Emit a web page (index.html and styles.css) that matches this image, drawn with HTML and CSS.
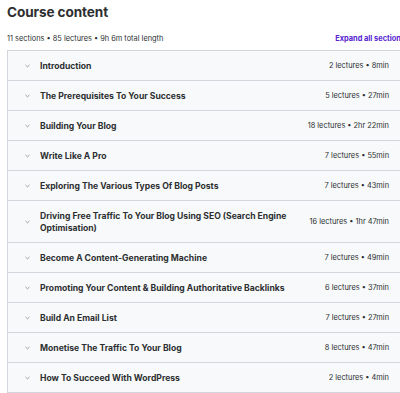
FILE: index.html
```html
<!DOCTYPE html>
<html lang="en">
<head>
  <meta charset="UTF-8">
  <meta name="viewport" content="width=device-width, initial-scale=1.0">
  <title>Course content</title>
  <link rel="stylesheet" href="styles.css">
</head>
<body>
<div class="curriculum">
  <h2>Course content</h2>
  <div class="summary">
    <span>11 sections • 85 lectures • 9h 6m total length</span>
    <a href="#" class="expand">Expand all sections</a>
  </div>

  <div class="sections">
    <div class="section">
      <svg class="chevron" viewBox="0 0 6 4"><path d="M0.6 0.7 L3 3 L5.4 0.7"/></svg>
      <span class="title">Introduction</span>
      <span class="meta">2 lectures • 8min</span>
    </div>
    <div class="section">
      <svg class="chevron" viewBox="0 0 6 4"><path d="M0.6 0.7 L3 3 L5.4 0.7"/></svg>
      <span class="title">The Prerequisites To Your Success</span>
      <span class="meta">5 lectures • 27min</span>
    </div>
    <div class="section">
      <svg class="chevron" viewBox="0 0 6 4"><path d="M0.6 0.7 L3 3 L5.4 0.7"/></svg>
      <span class="title">Building Your Blog</span>
      <span class="meta">18 lectures • 2hr 22min</span>
    </div>
    <div class="section">
      <svg class="chevron" viewBox="0 0 6 4"><path d="M0.6 0.7 L3 3 L5.4 0.7"/></svg>
      <span class="title">Write Like A Pro</span>
      <span class="meta">7 lectures • 55min</span>
    </div>
    <div class="section">
      <svg class="chevron" viewBox="0 0 6 4"><path d="M0.6 0.7 L3 3 L5.4 0.7"/></svg>
      <span class="title">Exploring The Various Types Of Blog Posts</span>
      <span class="meta">7 lectures • 43min</span>
    </div>
    <div class="section">
      <svg class="chevron" viewBox="0 0 6 4"><path d="M0.6 0.7 L3 3 L5.4 0.7"/></svg>
      <span class="title">Driving Free Traffic To Your Blog Using SEO (Search Engine Optimisation)</span>
      <span class="meta">16 lectures • 1hr 47min</span>
    </div>
    <div class="section">
      <svg class="chevron" viewBox="0 0 6 4"><path d="M0.6 0.7 L3 3 L5.4 0.7"/></svg>
      <span class="title">Become A Content-Generating Machine</span>
      <span class="meta">7 lectures • 49min</span>
    </div>
    <div class="section">
      <svg class="chevron" viewBox="0 0 6 4"><path d="M0.6 0.7 L3 3 L5.4 0.7"/></svg>
      <span class="title">Promoting Your Content &amp; Building Authoritative Backlinks</span>
      <span class="meta">6 lectures • 37min</span>
    </div>
    <div class="section">
      <svg class="chevron" viewBox="0 0 6 4"><path d="M0.6 0.7 L3 3 L5.4 0.7"/></svg>
      <span class="title">Build An Email List</span>
      <span class="meta">7 lectures • 27min</span>
    </div>
    <div class="section">
      <svg class="chevron" viewBox="0 0 6 4"><path d="M0.6 0.7 L3 3 L5.4 0.7"/></svg>
      <span class="title">Monetise The Traffic To Your Blog</span>
      <span class="meta">8 lectures • 47min</span>
    </div>
    <div class="section">
      <svg class="chevron" viewBox="0 0 6 4"><path d="M0.6 0.7 L3 3 L5.4 0.7"/></svg>
      <span class="title">How To Succeed With WordPress</span>
      <span class="meta">2 lectures • 4min</span>
    </div>
  </div>
</div>
</body>
</html>
```

FILE: styles.css
```css
body {
    font-family: Inter, "Noto Sans", sans-serif;
    margin: 0;
    padding: 0;
    background-color: #fff;
    color: #2d2f31;
    overflow: hidden;
}

.curriculum {
    width: 398px;
    padding-left: 7px;
}

h2 {
    margin: 0;
    padding-top: 3px;
    font-size: 13.6px;
    font-weight: 700;
    line-height: 18px;
    letter-spacing: -0.1px;
}

.summary {
    display: flex;
    justify-content: space-between;
    align-items: center;
    margin-top: 12px;
    margin-bottom: 5px;
    font-size: 7.4px;
    line-height: 12px;
    white-space: nowrap;
}

.expand {
    color: #5624d0;
    font-weight: 700;
    text-decoration: none;
}

.sections {
    border: 1px solid #d1d7dc;
    border-bottom: none;
}

.section {
    display: flex;
    align-items: center;
    padding: 8.5px 15px 8.5px 17px;
    background: #f7f9fa;
    border-bottom: 1px solid #d1d7dc;
}

.chevron {
    width: 5px;
    height: 4px;
    flex-shrink: 0;
    margin-right: 10px;
    fill: none;
    stroke: #6a6f73;
    stroke-width: 0.8;
}

.title {
    flex: 1;
    font-size: 8.6px;
    font-weight: 700;
    line-height: 12px;
    padding-right: 14px;
}

.meta {
    font-size: 7.4px;
    line-height: 12px;
    white-space: nowrap;
}
```
